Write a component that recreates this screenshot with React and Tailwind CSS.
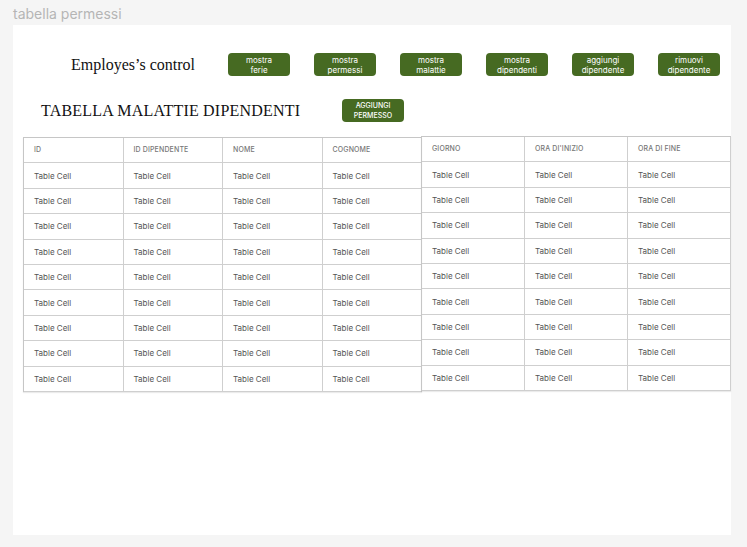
import React from 'react';

const topButtons = [
  ['mostra', 'ferie'],
  ['mostra', 'permessi'],
  ['mostra', 'malattie'],
  ['mostra', 'dipendenti'],
  ['aggiungi', 'dipendente'],
  ['rimuovi', 'dipendente'],
];

const leftCols = ['ID', 'ID DIPENDENTE', 'NOME', 'COGNOME'];
const rightCols = ['GIORNO', "ORA DI'INIZIO", 'ORA DI FINE'];
const rows = Array.from({ length: 9 });

function GreenButton({ lines, upper }) {
  return (
    <button
      className={`w-[62px] h-[23px] rounded-[4px] bg-[#466a22] text-white flex flex-col items-center justify-center leading-[10px] font-['Inter',sans-serif] ${
        upper ? 'text-[7px] font-medium' : 'text-[8px]'
      }`}
    >
      {lines.map((l) => (
        <span key={l}>{l}</span>
      ))}
    </button>
  );
}

// one block of columns, drawn as its own bordered grid
function TableGroup({ cols, colWidth, className = '' }) {
  return (
    <div className={`border-l border-t border-[#c6c6c6] shadow-[0_1px_1px_rgba(0,0,0,0.08)] ${className}`}>
      <div className="flex">
        {cols.map((c) => (
          <div
            key={c}
            className={`${colWidth} h-[25.4px] border-r border-b border-[#cfcfcf] pl-[10px] flex items-center text-[7px] font-medium text-[#777] tracking-[0.02em]`}
          >
            {c}
          </div>
        ))}
      </div>
      {rows.map((_, i) => (
        <div key={i} className="flex">
          {cols.map((c) => (
            <div
              key={c}
              className={`${colWidth} h-[25.4px] border-r border-b border-[#cfcfcf] pl-[10px] flex items-center text-[8px] text-[#555]`}
            >
              Table Cell
            </div>
          ))}
        </div>
      ))}
    </div>
  );
}

export default function App() {
  return (
    <div className="w-[747px] h-[547px] bg-[#f5f5f5] pt-[6px] pl-[13px] overflow-hidden">
      {/* Frame label */}
      <div className="h-[19px] leading-4 text-[14px] text-[#b5b5b5] font-['Inter',sans-serif]">
        tabella permessi
      </div>

      {/* Frame */}
      <div className="w-[718px] h-[510px] bg-white font-['Inter',sans-serif]">
        {/* Top bar */}
        <div className="flex items-center pt-[28px] pl-[58px]">
          <div className="w-[157px] text-[16px] leading-5 text-[#111] font-['Liberation_Serif',serif]">
            Employes’s control
          </div>
          <div className="flex gap-[24px]">
            {topButtons.map((b) => (
              <GreenButton key={b.join('-')} lines={b} />
            ))}
          </div>
        </div>

        {/* Table title */}
        <div className="flex items-center mt-[23px] pl-[28px]">
          <div className="w-[301px] text-[16px] leading-5 tracking-[0.2px] text-[#111] font-['Liberation_Serif',serif]">
            TABELLA MALATTIE DIPENDENTI
          </div>
          <GreenButton lines={['AGGIUNGI', 'PERMESSO']} upper />
        </div>

        {/* Table */}
        <div className="flex items-start mt-[15px] ml-[10px]">
          <TableGroup cols={leftCols} colWidth="w-[99.5px]" />
          <TableGroup cols={rightCols} colWidth="w-[103px]" className="-mt-px -ml-px" />
        </div>
      </div>
    </div>
  );
}
